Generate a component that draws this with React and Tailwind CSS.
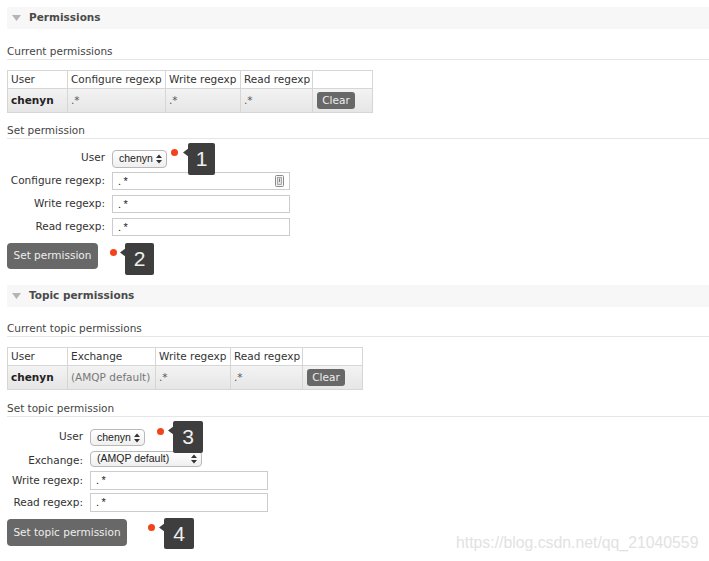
import React from "react";

const Tri = () => (
  <svg width="9" height="6" viewBox="0 0 9 6">
    <path d="M0 0H9L4.5 6Z" fill="#b4b4b4" />
  </svg>
);

const Arrows = () => (
  <svg width="6" height="10" viewBox="0 0 6 10">
    <path d="M0 4L3 0.5L6 4Z" fill="#333" />
    <path d="M0 6L3 9.5L6 6Z" fill="#333" />
  </svg>
);

function SectionHeader({ title, mt }) {
  return (
    <div className={`${mt} h-[22px] bg-[#f7f7f7] flex items-center pl-[5px]`}>
      <Tri />
      <span className="ml-[8px] font-bold text-[#4a4a4a]">{title}</span>
    </div>
  );
}

function SubHeading({ children, mt }) {
  return (
    <div className={`${mt} h-[16px] leading-[14px] border-b border-[#e6e6e6] text-[#444]`}>
      {children}
    </div>
  );
}

function Select({ w, text }) {
  return (
    <div
      className={`${w} h-full rounded-[4px] border border-[#b8b8b8] bg-gradient-to-b from-white to-[#efefef] flex items-center justify-between pl-[6px] pr-[4px] font-['Liberation_Sans',sans-serif] text-[10.5px] text-[#222]`}
    >
      <span>{text}</span>
      <Arrows />
    </div>
  );
}

function Input({ icon }) {
  return (
    <div className="w-[178px] h-full border border-[#cccccc] bg-white flex items-center justify-between pl-[5px] pr-[5px] font-['Liberation_Sans',sans-serif] text-[11px] text-[#222]">
      <span className="tracking-[2.5px]">.*</span>
      {icon && (
        <svg width="9" height="12" viewBox="0 0 9 12">
          <rect x="0.5" y="0.5" width="8" height="11" rx="1" fill="#f4f4f4" stroke="#8a8a8a" />
          <rect x="2.5" y="2.5" width="4" height="7" fill="#e0e0e0" stroke="#9a9a9a" strokeWidth="0.8" />
          <path d="M4.5 3.5V7" stroke="#666" strokeWidth="0.8" />
        </svg>
      )}
    </div>
  );
}

function Button({ w, h, mt, children }) {
  return (
    <div
      className={`${mt} ${w} ${h} rounded-[4px] bg-[#686868] text-[#eeeeee] flex items-center justify-center whitespace-nowrap`}
    >
      {children}
    </div>
  );
}

function HeadCell({ children }) {
  return (
    <div className="h-[18px] pl-[3px] border-r border-b border-[#d6d6d6] bg-white flex items-center text-[#333] whitespace-nowrap overflow-visible">
      {children}
    </div>
  );
}

function DataCell({ children, cls = "" }) {
  return (
    <div
      className={`h-[24px] pl-[3px] border-r border-b border-[#d6d6d6] bg-gradient-to-b from-[#f3f3f3] to-[#e6e6e6] flex items-center whitespace-nowrap ${cls}`}
    >
      {children}
    </div>
  );
}

function ClearBtn() {
  return (
    <div className="ml-[1px] w-[38px] h-[17px] rounded-[3px] bg-[#686868] text-[#eeeeee] flex items-center justify-center">
      Clear
    </div>
  );
}

function Notch() {
  return (
    <svg className="absolute left-[-5px] top-[5px]" width="6" height="9" viewBox="0 0 6 9">
      <path d="M6 0L0 4.5L6 9Z" fill="#3e3e3e" />
    </svg>
  );
}

export default function App() {
  return (
    <div className="relative w-[709px] h-[561px] overflow-hidden bg-white font-['DejaVu_Sans',sans-serif] text-[10.5px] text-[#333]">
      <div className="pl-[7px] pt-[7px]">
        <SectionHeader title="Permissions" mt="mt-0" />
        <SubHeading mt="mt-[15px]">Current permissions</SubHeading>

        <div className="mt-[10px] inline-grid grid-cols-[60px_98px_75px_72px_60px] border-l border-t border-[#d6d6d6] align-top">
          <HeadCell>User</HeadCell>
          <HeadCell>Configure regexp</HeadCell>
          <HeadCell>Write regexp</HeadCell>
          <HeadCell>Read regexp</HeadCell>
          <HeadCell></HeadCell>
          <DataCell cls="font-bold text-[#222]">chenyn</DataCell>
          <DataCell cls="text-[#555] items-start pt-[4px]">.*</DataCell>
          <DataCell cls="text-[#555] items-start pt-[4px]">.*</DataCell>
          <DataCell cls="text-[#555] items-start pt-[4px]">.*</DataCell>
          <DataCell>
            <ClearBtn />
          </DataCell>
        </div>

        <SubHeading mt="mt-[10px]">Set permission</SubHeading>

        <div className="mt-[11px] flex items-center h-[18px]">
          <div className="w-[98px] text-right pb-[2px]">User</div>
          <div className="ml-[7px] h-full">
            <Select w="w-[55px]" text="chenyn" />
          </div>
        </div>
        <div className="mt-[4px] flex items-center h-[18px]">
          <div className="w-[98px] text-right">Configure regexp:</div>
          <div className="ml-[7px] h-full">
            <Input icon />
          </div>
        </div>
        <div className="mt-[5px] flex items-center h-[18px]">
          <div className="w-[98px] text-right">Write regexp:</div>
          <div className="ml-[7px] h-full">
            <Input />
          </div>
        </div>
        <div className="mt-[5px] flex items-center h-[18px]">
          <div className="w-[98px] text-right">Read regexp:</div>
          <div className="ml-[7px] h-full">
            <Input />
          </div>
        </div>

        <Button mt="mt-[7px]" w="w-[91px]" h="h-[26px]">
          Set permission
        </Button>

        <SectionHeader title="Topic permissions" mt="mt-[16px]" />
        <SubHeading mt="mt-[14px]">Current topic permissions</SubHeading>

        <div className="mt-[10px] inline-grid grid-cols-[60px_88px_75px_72px_60px] border-l border-t border-[#d6d6d6] align-top">
          <HeadCell>User</HeadCell>
          <HeadCell>Exchange</HeadCell>
          <HeadCell>Write regexp</HeadCell>
          <HeadCell>Read regexp</HeadCell>
          <HeadCell></HeadCell>
          <DataCell cls="font-bold text-[#222]">chenyn</DataCell>
          <DataCell cls="text-[#777]">(AMQP default)</DataCell>
          <DataCell cls="text-[#555] items-start pt-[4px]">.*</DataCell>
          <DataCell cls="text-[#555] items-start pt-[4px]">.*</DataCell>
          <DataCell>
            <ClearBtn />
          </DataCell>
        </div>

        <SubHeading mt="mt-[11px]">Set topic permission</SubHeading>

        <div className="mt-[12px] flex items-center h-[17px]">
          <div className="w-[76px] text-right pb-[2px]">User</div>
          <div className="ml-[7px] h-full">
            <Select w="w-[55px]" text="chenyn" />
          </div>
        </div>
        <div className="mt-[5px] flex items-center h-[16px]">
          <div className="w-[76px] text-right pt-[3px]">Exchange:</div>
          <div className="ml-[7px] h-full">
            <Select w="w-[112px]" text="(AMQP default)" />
          </div>
        </div>
        <div className="mt-[4px] flex items-center h-[19px]">
          <div className="w-[76px] text-right">Write regexp:</div>
          <div className="ml-[7px] h-full">
            <Input />
          </div>
        </div>
        <div className="mt-[3px] flex items-center h-[19px]">
          <div className="w-[76px] text-right">Read regexp:</div>
          <div className="ml-[7px] h-full">
            <Input />
          </div>
        </div>

        <Button mt="mt-[7px]" w="w-[120px]" h="h-[27px]">
          Set topic permission
        </Button>
      </div>

      {/* Callout 1 */}
      <div className="absolute left-[171px] top-[149px] w-[7px] h-[7px] rounded-full bg-[#f2431a]" />
      <div className="absolute left-[188px] top-[143px] w-[27px] h-[32px] rounded-[2px] bg-[#3e3e3e] flex items-center justify-center font-['Liberation_Sans',sans-serif] text-[21px] text-[#f0f0f0]">
        <Notch />1
      </div>

      {/* Callout 2 */}
      <div className="absolute left-[110px] top-[249px] w-[7px] h-[7px] rounded-full bg-[#f2431a]" />
      <div className="absolute left-[125px] top-[243px] w-[29px] h-[32px] rounded-[2px] bg-[#3e3e3e] flex items-center justify-center font-['Liberation_Sans',sans-serif] text-[21px] text-[#f0f0f0]">
        <Notch />2
      </div>

      {/* Callout 3 */}
      <div className="absolute left-[157px] top-[428px] w-[7px] h-[7px] rounded-full bg-[#f2431a]" />
      <div className="absolute left-[173px] top-[421px] w-[30px] h-[32px] rounded-[2px] bg-[#3e3e3e] flex items-center justify-center font-['Liberation_Sans',sans-serif] text-[21px] text-[#f0f0f0]">
        <Notch />3
      </div>

      {/* Callout 4 */}
      <div className="absolute left-[148px] top-[524px] w-[7px] h-[7px] rounded-full bg-[#f2431a]" />
      <div className="absolute left-[164px] top-[518px] w-[30px] h-[31px] rounded-[2px] bg-[#3e3e3e] flex items-center justify-center font-['Liberation_Sans',sans-serif] text-[21px] text-[#f0f0f0]">
        <Notch />4
      </div>

      {/* Watermark */}
      <div className="absolute left-[456px] top-[532px] font-['Liberation_Sans',sans-serif] text-[15.8px] leading-[21px] text-[#e2e2e2]">
        https://blog.csdn.net/qq_21040559
      </div>
    </div>
  );
}
